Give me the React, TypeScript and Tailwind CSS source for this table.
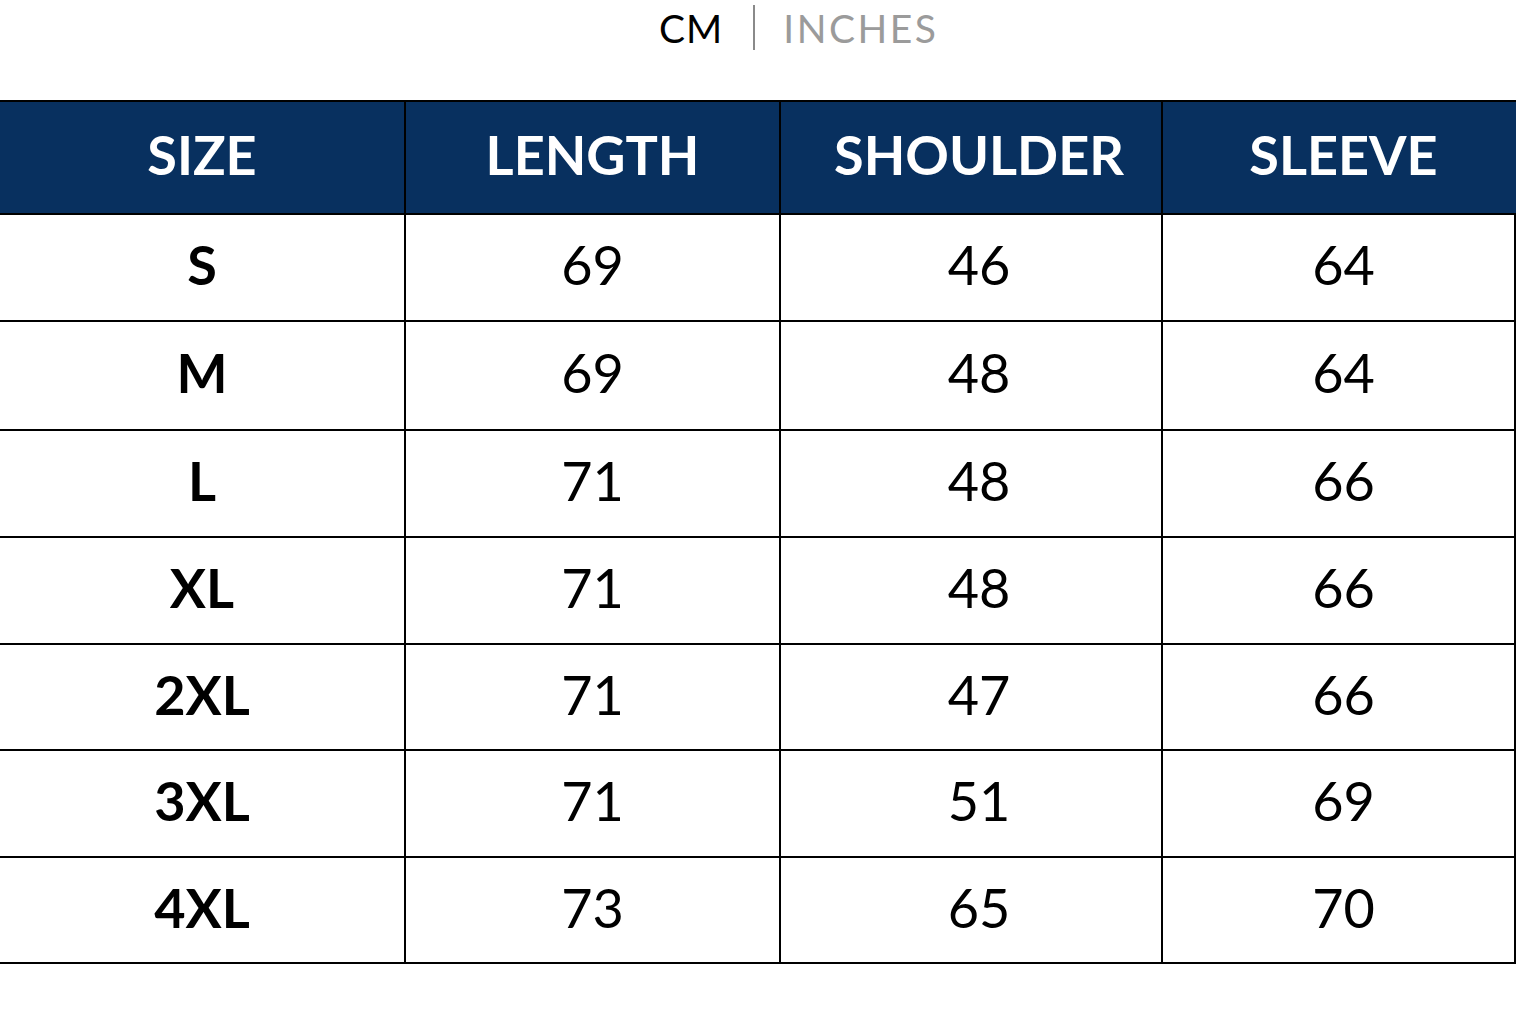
const rows = [
  ["S", "69", "46", "64"],
  ["M", "69", "48", "64"],
  ["L", "71", "48", "66"],
  ["XL", "71", "48", "66"],
  ["2XL", "71", "47", "66"],
  ["3XL", "71", "51", "69"],
  ["4XL", "73", "65", "70"],
];

const rowHeights = ["h-[107px]", "h-[109px]", "h-[107px]", "h-[107px]", "h-[106px]", "h-[107px]", "h-[106px]"];

const headers = ["SIZE", "LENGTH", "SHOULDER", "SLEEVE"];

// columns 3 and 4 sit a little right of centre in the reference
const colPad = ["", "", "pl-[16px]", "pl-[8px]"];

export default function App() {
  return (
    <div
      className="w-[1536px] h-[1024px] bg-white overflow-hidden"
      style={{ fontFamily: "Lato, 'Open Sans', sans-serif" }}
    >
      {/* unit toggle */}
      <div className="h-[100px] flex items-start pl-[659px] pt-[5px]">
        <span className="text-[39px] leading-[46px] text-black tracking-[1px]">CM</span>
        <span className="w-[2px] h-[45px] bg-[#8a8a8a] ml-[30px] mr-[28px]" />
        <span className="text-[39px] leading-[46px] text-[#9b9b9b] tracking-[2.5px]">INCHES</span>
      </div>

      {/* size table */}
      <div className="w-[1516px] border-t-2 border-r-2 border-black grid grid-cols-[406px_375px_382px_353px]">
        {headers.map((h, i) => (
          <div
            key={h}
            className={`h-[113px] pb-[6px] bg-[#08305f] flex items-center justify-center text-white font-bold text-[54px] border-b-2 border-black ${i < 3 ? "border-r-2" : ""} ${colPad[i]}`}
          >
            {h}
          </div>
        ))}
        {rows.map((r, ri) =>
          r.map((c, i) => (
            <div
              key={r[0] + i}
              className={`${rowHeights[ri]} pb-[6px] flex items-center justify-center text-black text-[54px] border-b-2 border-black ${i < 3 ? "border-r-2" : ""} ${i === 0 ? "font-bold" : ""} ${colPad[i]}`}
            >
              {c}
            </div>
          ))
        )}
      </div>
    </div>
  );
}
